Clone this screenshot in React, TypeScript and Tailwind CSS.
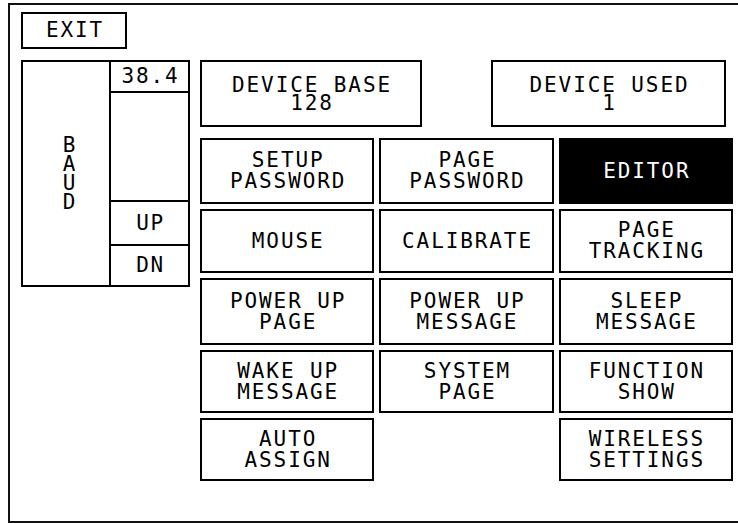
import React from "react";

const font = { fontFamily: "'DejaVu Sans Mono', 'Liberation Mono', monospace" };

function Btn({
  lines,
  dark = false,
  className = "",
  leading = "leading-[21px]",
}: {
  lines: string[];
  dark?: boolean;
  className?: string;
  leading?: string;
}) {
  return (
    <div
      className={`flex flex-col items-center justify-center border-2 border-black pl-[2px] text-[21px] tracking-[1.9px] ${leading} ${
        dark ? "bg-black text-white" : "bg-white text-black"
      } ${className}`}
    >
      {lines.map((l, i) => (
        <div key={i} className="whitespace-pre">
          {l}
        </div>
      ))}
    </div>
  );
}

export default function App() {
  return (
    <div className="relative h-[523px] w-[738px] overflow-hidden bg-white text-black" style={font}>
      <div className="ml-[8px] mt-[3px] h-[520px] w-[740px] border-b-2 border-l-2 border-t-2 border-[#111] pl-[11px] pt-[7px]">
        {/* EXIT */}
        <div className="flex h-[37px] w-[106px] items-center justify-center border-2 border-black pl-[2px] text-[21px] leading-[21px] tracking-[1.9px]">
          EXIT
        </div>

        <div className="mt-[11px] flex">
          {/* BAUD panel */}
          <div className="flex h-[227px] w-[169px] border-2 border-black">
            <div className="flex w-[86px] flex-col items-center justify-center pl-[6px] text-[21px] leading-[19px]">
              <div>B</div>
              <div>A</div>
              <div>U</div>
              <div>D</div>
            </div>
            <div className="flex flex-1 flex-col border-l-2 border-black">
              <div className="flex h-[31px] items-center justify-center border-b-2 border-black pl-[2px] text-[21px] leading-[21px] tracking-[1.9px]">
                38.4
              </div>
              <div className="h-[107px]" />
              <div className="flex h-[44px] items-center justify-center border-t-2 border-black pl-[2px] text-[21px] leading-[21px] tracking-[1.5px]">
                UP
              </div>
              <div className="flex flex-1 items-center justify-center border-t-2 border-black pl-[2px] text-[21px] leading-[21px] tracking-[1.5px]">
                DN
              </div>
            </div>
          </div>

          {/* Right area */}
          <div className="ml-[10px] flex w-[533px] flex-col">
            <div className="flex gap-[69px]">
              <Btn lines={["DEVICE BASE", "128"]} leading="leading-[18px]" className="h-[67px] w-[222px]" />
              <Btn lines={["DEVICE USED", "1"]} leading="leading-[18px]" className="h-[67px] w-[235px]" />
            </div>
            <div className="mt-[11px] grid grid-cols-3 grid-rows-[66px_64px_67px_63px_63px] gap-x-[5px] gap-y-[5px]">
              <Btn lines={["SETUP", "PASSWORD"]} />
              <Btn lines={["PAGE", "PASSWORD"]} />
              <Btn lines={["EDITOR"]} dark />
              <Btn lines={["MOUSE"]} />
              <Btn lines={["CALIBRATE"]} />
              <Btn lines={["PAGE", "TRACKING"]} />
              <Btn lines={["POWER UP", "PAGE"]} />
              <Btn lines={["POWER UP", "MESSAGE"]} />
              <Btn lines={["SLEEP", "MESSAGE"]} />
              <Btn lines={["WAKE UP", "MESSAGE"]} />
              <Btn lines={["SYSTEM", "PAGE"]} />
              <Btn lines={["FUNCTION", "SHOW"]} />
              <Btn lines={["AUTO", "ASSIGN"]} />
              <div />
              <Btn lines={["WIRELESS", "SETTINGS"]} />
            </div>
          </div>
        </div>
      </div>
    </div>
  );
}
